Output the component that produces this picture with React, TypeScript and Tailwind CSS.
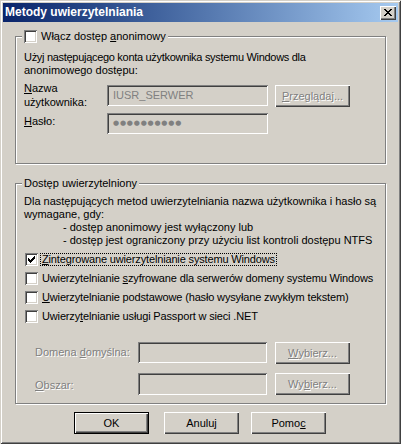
import React from 'react';

// Classic 3D edges
const raised = 'shadow-[inset_1px_1px_0_#fff,inset_-1px_-1px_0_#404040,inset_-2px_-2px_0_#808080]';
const sunken = 'shadow-[inset_1px_1px_0_#808080,inset_-1px_-1px_0_#fff,inset_2px_2px_0_#404040,inset_-2px_-2px_0_#d4d0c8]';
const grayText = 'text-[#808080] [text-shadow:1px_1px_0_#fff]';

function Key({ children }: { children: React.ReactNode }) {
  return <span className="underline underline-offset-[1px]">{children}</span>;
}

function CheckMark() {
  const px: [number, number, number][] = [
    [6, 0, 1], [5, 1, 2], [0, 2, 1], [4, 2, 3], [0, 3, 2], [3, 3, 3], [0, 4, 5], [1, 5, 3], [2, 6, 1],
  ];
  return (
    <svg width="7" height="7" viewBox="0 0 7 7" shapeRendering="crispEdges">
      {px.map(([x, y, w], i) => (
        <rect key={i} x={x} y={y} width={w} height={1} fill="#000" />
      ))}
    </svg>
  );
}

function CloseGlyph() {
  const px: [number, number, number][] = [
    [0, 0, 2], [6, 0, 2], [1, 1, 2], [5, 1, 2], [2, 2, 4], [3, 3, 2], [2, 4, 4], [1, 5, 2], [5, 5, 2], [0, 6, 2], [6, 6, 2],
  ];
  return (
    <svg width="8" height="7" viewBox="0 0 8 7" shapeRendering="crispEdges">
      {px.map(([x, y, w], i) => (
        <rect key={i} x={x} y={y} width={w} height={1} fill="#000" />
      ))}
    </svg>
  );
}

function CheckBox({ checked = false }: { checked?: boolean }) {
  return (
    <span className={`w-[13px] h-[13px] bg-white flex items-center justify-center shrink-0 ${sunken}`}>
      {checked && <CheckMark />}
    </span>
  );
}

function Button({ children, disabled, isDefault, className = '' }: { children: React.ReactNode; disabled?: boolean; isDefault?: boolean; className?: string }) {
  return (
    <div
      className={`w-[75px] h-[22px] bg-[#d4d0c8] flex items-center justify-center shrink-0 ${isDefault ? 'border border-black' : ''} ${className}`}
    >
      <div className={`w-full h-full flex items-center justify-center ${raised} ${disabled ? grayText : ''}`}>{children}</div>
    </div>
  );
}

function Field({ width, children }: { width: string; children?: React.ReactNode }) {
  return <div className={`${width} h-[21px] bg-[#d4d0c8] flex items-center pl-[6px] shrink-0 ${sunken}`}>{children}</div>;
}

function GroupBox({ legend, className, children }: { legend: React.ReactNode; className: string; children: React.ReactNode }) {
  return (
    <div className={`relative border border-[#808080] shadow-[inset_1px_1px_0_#fff,1px_1px_0_#fff] w-[371px] ${className}`}>
      <div className="absolute top-[-7px] left-[6px] px-[2px] bg-[#d4d0c8] flex items-center gap-[4px] h-[13px]">{legend}</div>
      {children}
    </div>
  );
}

const methods = [
  { label: <><Key>Z</Key>integrowane uwierzytelnianie systemu Windows</>, checked: true, focus: true },
  { label: <>Uwierzytelnianie <Key>s</Key>zyfrowane dla serwerów domeny systemu Windows</> },
  { label: <><Key>U</Key>wierzytelnianie podstawowe (hasło wysyłane zwykłym tekstem)</> },
  { label: <>Uwierzy<Key>t</Key>elnianie usługi Passport w sieci .NET</> },
];

export default function App() {
  return (
    <div className="w-[401px] h-[444px] bg-[#d4d0c8] p-[3px] shadow-[inset_1px_1px_0_#d4d0c8,inset_-1px_-1px_0_#404040,inset_2px_2px_0_#fff,inset_-2px_-2px_0_#808080] font-['Liberation_Sans',Arial,sans-serif] text-[11px] leading-[13px] text-black">
      {/* title bar */}
      <div className="h-[19px] bg-gradient-to-r from-[#0a246a] to-[#a6caf0] flex items-center justify-between pl-[2px] pr-[2px]">
        <span className="text-white font-bold text-[12px]">Metody uwierzytelniania</span>
        <div className={`w-[16px] h-[14px] bg-[#d4d0c8] flex items-center justify-center ${raised}`}>
          <CloseGlyph />
        </div>
      </div>

      <div className="px-[12px]">
        {/* anonymous access */}
        <GroupBox
          className="mt-[14px] h-[128px]"
          legend={
            <>
              <CheckBox />
              <span>Włącz dostęp <Key>a</Key>nonimowy</span>
            </>
          }
        >
          <div className="pt-[14px] pl-[8px]">
            <p className="tracking-[-0.3px]">Użyj następującego konta użytkownika systemu Windows dla</p>
            <p>anonimowego dostępu:</p>
            <div className="flex mt-[4px]">
              <div className="w-[83px] leading-[14px]">
                <Key>N</Key>azwa
                <br />
                użytkownika:
              </div>
              <div className="mt-[4px]">
                <Field width="w-[161px]">
                  <span className="text-[#808080]">IUSR_SERWER</span>
                </Field>
              </div>
              <Button disabled className="mt-[4px] ml-[7px]">
                <Key>P</Key>rzeglądaj...
              </Button>
            </div>
            <div className="flex mt-[4px]">
              <div className="w-[83px] mt-[2px]">
                <Key>H</Key>asło:
              </div>
              <Field width="w-[161px]">
                <span className="text-[#808080] font-['DejaVu_Sans',sans-serif] text-[7px] tracking-[0.8px]">●●●●●●●●●●</span>
              </Field>
            </div>
          </div>
        </GroupBox>

        {/* authenticated access */}
        <GroupBox className="mt-[19px] h-[221px]" legend={<span>Dostęp uwierzytelniony</span>}>
          <div className="pt-[11px] pl-[8px]">
            <p>Dla następujących metod uwierzytelniania nazwa użytkownika i hasło są</p>
            <p>wymagane, gdy:</p>
            <p className="pl-[39px]">- dostęp anonimowy jest wyłączony lub</p>
            <p className="pl-[39px]">- dostęp jest ograniczony przy użyciu list kontroli dostępu NTFS</p>
            <div className="mt-[3px] tracking-[-0.15px]">
              {methods.map((m, i) => (
                <div key={i} className="h-[19px] flex items-center gap-[4px] pl-[1px]">
                  <CheckBox checked={m.checked} />
                  {m.focus ? (
                    <span className="-ml-[2px] px-[1px] border border-dotted border-black leading-[11px]">{m.label}</span>
                  ) : (
                    <span>{m.label}</span>
                  )}
                </div>
              ))}
            </div>
            <div className="flex mt-[16px] h-[22px]">
              <div className={`w-[114px] pl-[11px] mt-[4px] ${grayText}`}>
                Domena <Key>d</Key>omyślna:
              </div>
              <Field width="w-[129px]" />
              <Button disabled className="ml-[8px]">
                <Key>W</Key>ybierz...
              </Button>
            </div>
            <div className="flex mt-[9px] h-[22px]">
              <div className={`w-[114px] pl-[11px] mt-[6px] ${grayText}`}>
                <Key>O</Key>bszar:
              </div>
              <div className={`w-[129px] h-[22px] bg-[#d4d0c8] shrink-0 ${sunken}`} />
              <Button disabled className="ml-[8px]">
                Wy<Key>b</Key>ierz...
              </Button>
            </div>
          </div>
        </GroupBox>

        {/* dialog buttons */}
        <div className="flex mt-[8px] pl-[59px]">
          <Button isDefault>OK</Button>
          <Button className="ml-[15px]">Anuluj</Button>
          <Button className="ml-[12px]">
            Pomo<Key>c</Key>
          </Button>
        </div>
      </div>
    </div>
  );
}
